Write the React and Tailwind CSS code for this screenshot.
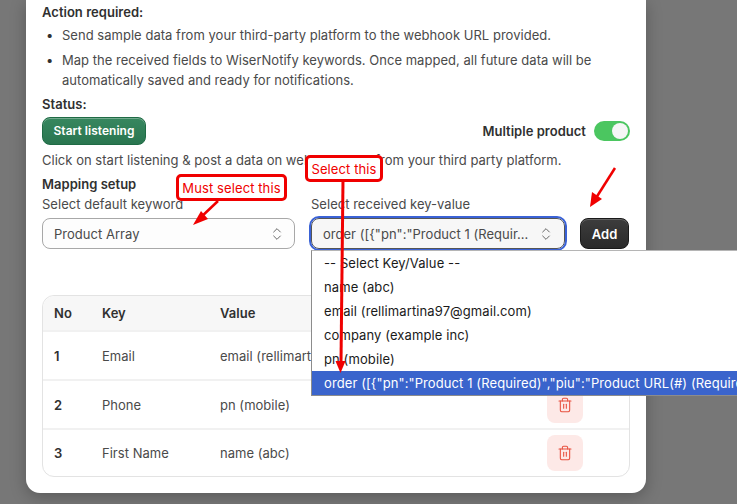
import React from 'react';
import { ChevronsUpDown, Trash2 } from 'lucide-react';

const rows = [
  { no: 1, name: 'Email', value: 'email (rellimartina97@gmail.com)' },
  { no: 2, name: 'Phone', value: 'pn (mobile)' },
  { no: 3, name: 'First Name', value: 'name (abc)' },
];

const options = [
  '-- Select Key/Value --',
  'name (abc)',
  'email (rellimartina97@gmail.com)',
  'company (example inc)',
  'pn (mobile)',
];

function Callout({ className, children }) {
  return (
    <div className={`absolute z-30 flex h-[27px] items-center justify-center rounded-[5px] border-[3px] border-[#f00000] bg-white text-[13px] tracking-[0.1px] text-[#f00000] ${className}`}>
      {children}
    </div>
  );
}

export default function App() {
  return (
    <div className="relative h-[504px] w-[737px] overflow-hidden bg-[#777777] font-['Inter',sans-serif] text-[13px] leading-5 tracking-[0.025px] text-[#4a4a4a]">
      <div className="ml-[26px] h-[493px] w-[620px] rounded-b-[14px] bg-white px-4 pt-[2px] shadow-[0_4px_16px_rgba(0,0,0,0.25)]">
        <div className="font-semibold text-[#303030]">Action required:</div>

        <ul className="mt-[3px] flex flex-col gap-[5px]">
          <li className="flex">
            <span className="w-5 shrink-0 pl-[4px] text-[#303030]">•</span>
            <span>Send sample data from your third-party platform to the webhook URL provided.</span>
          </li>
          <li className="flex">
            <span className="w-5 shrink-0 pl-[4px] text-[#303030]">•</span>
            <span>Map the received fields to WiserNotify keywords. Once mapped, all future data will be automatically saved and ready for notifications.</span>
          </li>
        </ul>

        <div className="mt-[4px] font-semibold text-[#303030]">Status:</div>

        <div className="mt-[3px] flex items-center justify-between">
          <button className="h-[28px] w-[104px] rounded-lg border border-[#1f6b45] bg-gradient-to-b from-[#37875f] to-[#2a7650] text-xs font-semibold text-white shadow-[inset_0_1px_0_rgba(255,255,255,0.3)]">
            Start listening
          </button>
          <div className="flex items-center gap-2">
            <span className="font-semibold text-[#303030]">Multiple product</span>
            <div className="flex h-5 w-9 items-center justify-end rounded-full bg-[#4bc660] pr-[2px]">
              <div className="h-4 w-4 rounded-full bg-[#f6f6f6]" />
            </div>
          </div>
        </div>

        <div className="mt-[5px]">Click on start listening &amp; post a data on webhook URL from your third party platform.</div>

        <div className="mt-[4px] font-semibold text-[#303030]">Mapping setup</div>

        <div className="flex">
          <div className="w-[253px]">
            <div>Select default keyword</div>
            <div className="mt-[4px] flex h-[31px] items-center justify-between rounded-lg border border-[#a8a8a8] bg-[#fdfdfd] pl-[11px] pr-[9px]">
              <span>Product Array</span>
              <ChevronsUpDown size={16} strokeWidth={1.4} className="text-[#5c5c5c]" />
            </div>
          </div>
          <div className="ml-4 w-[254px]">
            <div>Select received key-value</div>
            <div className="mt-[4px] flex h-[31px] items-center justify-between rounded-lg border border-[#555555] bg-[#f7f7f7] pl-[11px] pr-[10px] outline-2 outline-offset-0 outline-[#3a62d6]">
              <span className="truncate">order ([{'{'}"pn":"Product 1 (Requir...</span>
              <ChevronsUpDown size={16} strokeWidth={1.4} className="shrink-0 text-[#5c5c5c]" />
            </div>
          </div>
          <button className="ml-[15px] mt-6 h-[31px] w-[49px] rounded-lg border border-[#1a1a1a] bg-gradient-to-b from-[#3d3d3d] to-[#2a2a2a] font-semibold text-white shadow-[inset_0_1px_0_rgba(255,255,255,0.2)]">
            Add
          </button>
        </div>

        <table className="mt-[46px] w-[588px] table-fixed border-separate border-spacing-0 rounded-xl border border-[#e3e3e3]">
          <colgroup>
            <col className="w-[59px]" />
            <col className="w-[118px]" />
            <col className="w-[327px]" />
            <col />
          </colgroup>
          <thead>
            <tr className="h-[36px] font-semibold text-[#303030]">
              <th className="rounded-tl-xl border-b-2 border-[#f1f1f1] bg-[#f7f7f7] pl-[11px] text-left font-semibold">No</th>
              <th className="border-b-2 border-[#f1f1f1] bg-[#f7f7f7] text-left font-semibold">Key</th>
              <th className="rounded-tr-xl border-b-2 border-[#f1f1f1] bg-[#f7f7f7] text-left font-semibold" colSpan={2}>Value</th>
            </tr>
          </thead>
          <tbody>
            {rows.map((row, i) => (
              <tr key={row.no} className={i < 2 ? 'h-[49px]' : 'h-[46px]'}>
                <td className={`pl-[11px] font-semibold text-[#303030] ${i < 2 ? 'border-b-2 border-[#f1f1f1]' : ''}`}>{row.no}</td>
                <td className={i < 2 ? 'border-b-2 border-[#f1f1f1]' : ''}>{row.name}</td>
                <td className={`truncate ${i < 2 ? 'border-b-2 border-[#f1f1f1]' : ''}`}>{row.value}</td>
                <td className={i < 2 ? 'border-b-2 border-[#f1f1f1]' : ''}>
                  <div className="flex h-9 w-9 items-center justify-center rounded-lg bg-[#fde9e7] text-[#e8513f]">
                    <Trash2 size={16} strokeWidth={1.6} />
                  </div>
                </td>
              </tr>
            ))}
          </tbody>
        </table>
      </div>

      {/* native select popup, runs off the right edge */}
      <div className="absolute left-[311px] top-[250px] z-10 w-[470px] border border-[#8c8c8c] border-t-[#b5b5b5] bg-white leading-6 tracking-[0.1px] text-[#1a1a1a]">
        {options.map((o) => (
          <div key={o} className="h-6 whitespace-nowrap pl-3">{o}</div>
        ))}
        <div className="h-6 whitespace-nowrap bg-[#3a64cc] pl-3 text-white">
          order ([{'{'}"pn":"Product 1 (Required)","piu":"Product URL(#) (Required)"
        </div>
      </div>

      <Callout className="left-[176px] top-[174px] w-[111px]">Must select this</Callout>
      <Callout className="left-[305px] top-[155px] w-[78px]">Select this</Callout>

      {/* annotation arrows */}
      <svg className="absolute left-0 top-0 z-20" width="737" height="504" viewBox="0 0 737 504">
        <g stroke="#f00000" fill="none" strokeWidth="2.5">
          <path d="M218 201 L199 219" />
          <path d="M615 168 L596 198" />
          <path d="M343 180 L341 362" strokeWidth="3" />
        </g>
        <g fill="#f00000">
          <path d="M193 225 L201 211 L208 219 Z" />
          <path d="M590 207 L592 192 L602 199 Z" />
          <path d="M340.5 373 L335.5 361 L345.5 361 Z" />
        </g>
      </svg>
    </div>
  );
}
